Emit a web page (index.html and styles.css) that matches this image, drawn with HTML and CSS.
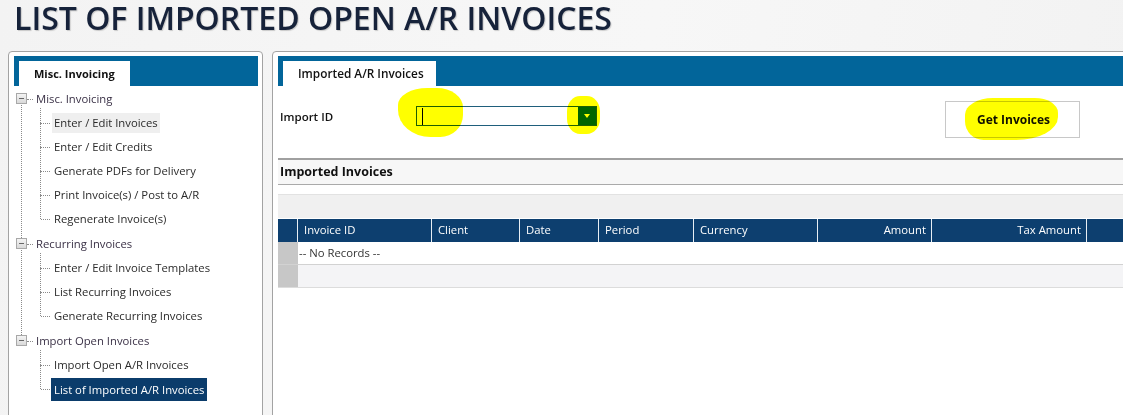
FILE: index.html
```html
<!DOCTYPE html>
<html>
<head>
<meta charset="utf-8">
<link rel="stylesheet" href="styles.css">
</head>
<body>
<h1 class="page-title">LIST OF IMPORTED OPEN A/R INVOICES</h1>
<div class="main">
  <aside class="panel side">
    <div class="tabbar"><div class="tab">Misc. Invoicing</div></div>
    <ul class="tree">
      <li class="root">
        <div class="root-node"><span class="exp"></span><span class="root-label">Misc. Invoicing</span></div>
        <ul class="children">
          <li class="child"><span class="label hover">Enter / Edit Invoices</span></li>
          <li class="child"><span class="label">Enter / Edit Credits</span></li>
          <li class="child"><span class="label">Generate PDFs for Delivery</span></li>
          <li class="child"><span class="label">Print Invoice(s) / Post to A/R</span></li>
          <li class="child"><span class="label">Regenerate Invoice(s)</span></li>
        </ul>
      </li>
      <li class="root">
        <div class="root-node"><span class="exp"></span><span class="root-label">Recurring Invoices</span></div>
        <ul class="children">
          <li class="child"><span class="label">Enter / Edit Invoice Templates</span></li>
          <li class="child"><span class="label">List Recurring Invoices</span></li>
          <li class="child"><span class="label">Generate Recurring Invoices</span></li>
        </ul>
      </li>
      <li class="root last">
        <div class="root-node"><span class="exp"></span><span class="root-label">Import Open Invoices</span></div>
        <ul class="children">
          <li class="child"><span class="label">Import Open A/R Invoices</span></li>
          <li class="child"><span class="label selected">List of Imported A/R Invoices</span></li>
        </ul>
      </li>
    </ul>
  </aside>
  <section class="panel content">
    <div class="tabbar"><div class="tab tab-wide">Imported A/R Invoices</div></div>
    <div class="form-row">
      <label class="field-label">Import ID</label>
      <div class="combo"><span class="caret"></span><span class="combo-btn"><span class="arrow"></span></span></div>
      <button class="get-btn">Get Invoices</button>
    </div>
    <div class="section-head">Imported Invoices</div>
    <div class="grid">
      <div class="grid-toolbar"></div>
      <div class="grid-row grid-header">
        <div class="cell sel"></div>
        <div class="cell">Invoice ID</div>
        <div class="cell">Client</div>
        <div class="cell">Date</div>
        <div class="cell">Period</div>
        <div class="cell">Currency</div>
        <div class="cell right">Amount</div>
        <div class="cell right">Tax Amount</div>
        <div class="cell last"></div>
      </div>
      <div class="grid-body">
        <div class="grid-row norec">
          <div class="cell sel"></div>
          <div class="cell span">-- No Records --</div>
        </div>
        <div class="grid-row footer">
          <div class="cell sel"></div>
          <div class="cell span"></div>
        </div>
      </div>
    </div>
  </section>
</div>
<div class="hl hl1"></div>
<div class="hl hl2"></div>
<div class="hl hl3"></div>
</body>
</html>
```
FILE: styles.css
```css
* { box-sizing: border-box; }
html, body { margin: 0; padding: 0; }
body {
  width: 1123px;
  height: 415px;
  overflow: hidden;
  position: relative;
  font-family: "Open Sans", "Liberation Sans", sans-serif;
  font-size: 11.3px;
  color: #222;
  background: linear-gradient(100deg, #f3f3f3 0%, #f7f7f7 55%, #f2f2f2 100%);
}
.page-title {
  margin: 0;
  padding: 0 0 0 14px;
  height: 51px;
  font-size: 32px;
  font-weight: 600;
  line-height: 36px;
  color: #16223a;
  letter-spacing: 0;
  text-shadow: 1px 1px 1px rgba(0,0,0,0.18);
}
.main {
  display: flex;
  gap: 9px;
  padding-left: 8px;
}
.panel {
  flex-shrink: 0;
  background: #fff;
  border: 1px solid #a3a3a3;
  height: 400px;
  padding-top: 4px;
}
.side {
  width: 255px;
  border-radius: 4px;
  padding-left: 5px;
  padding-right: 4px;
}
.content {
  width: 880px;
  border-radius: 4px 0 0 0;
  padding-left: 5px;
}
.tabbar {
  height: 30px;
  background: #02659a;
  padding: 5px 0 0 5px;
  display: flex;
}
.tab {
  height: 25px;
  width: 111px;
  background: #fff;
  font-weight: 700;
  font-size: 11px;
  line-height: 25px;
  padding-left: 15px;
  color: #111;
}
.tab-wide { width: 153px; font-weight: 600; font-size: 11.8px; }

/* tree */
.tree, .children { list-style: none; margin: 0; padding: 0; }
.root { position: relative; }
.root:not(.last)::before {
  content: "";
  position: absolute;
  left: 7px;
  top: 17px;
  bottom: -7px;
  border-left: 1px dotted #8a8a8a;
}
.root-node {
  height: 25px;
  display: flex;
  align-items: center;
}
.exp {
  width: 11px;
  height: 11px;
  margin-left: 2px;
  border: 1px solid #a8a8a8;
  background: linear-gradient(#f4f4f4, #d9d9d9);
  position: relative;
}
.exp::after {
  content: "";
  position: absolute;
  left: 2px; top: 4px;
  width: 5px; height: 1px;
  background: #666;
}
.root-label {
  margin-left: 9px;
  color: #3a3146;
  position: relative;
}
.root-label::before {
  content: "";
  position: absolute;
  left: -9px; top: 50%;
  width: 6px;
  border-top: 1px dotted #8a8a8a;
}
.children { position: relative; }
.child {
  height: 24px;
  display: flex;
  align-items: center;
  padding-left: 38px;
  position: relative;
}
.child::before {
  content: "";
  position: absolute;
  left: 26px; top: -12px; bottom: 12px;
  border-left: 1px dotted #8a8a8a;
}
.child:first-child::before { top: -3px; }
.child::after {
  content: "";
  position: absolute;
  left: 27px; top: 12px;
  width: 9px;
  border-top: 1px dotted #8a8a8a;
}
.label {
  display: block;
  height: 20px;
  line-height: 20px;
  padding: 0 2px;
  color: #2a2a2a;
}
.label.hover { background: #efefef; }
.label.selected {
  background: #0b3c6b;
  color: #fff;
  height: 23px;
  line-height: 23px;
  margin-left: -1px;
  padding: 0 3px;
}

/* form */
.form-row {
  height: 72px;
  display: flex;
  align-items: flex-start;
  padding-top: 15px;
}
.field-label {
  width: 138px;
  padding-left: 2px;
  margin-top: 8px;
  font-weight: 600;
  font-size: 11.5px;
  color: #111;
}
.combo {
  width: 181px;
  height: 20px;
  margin-top: 5px;
  border: 1px solid #1f5f7c;
  background: #fff;
  display: flex;
  justify-content: space-between;
}
.caret {
  width: 1px;
  height: 17px;
  margin: 1px 0 0 5px;
  background: #000;
}
.combo-btn {
  width: 18px;
  height: 18px;
  background: #006400;
  display: flex;
  align-items: center;
  justify-content: center;
}
.arrow {
  width: 0; height: 0;
  border-left: 3.5px solid transparent;
  border-right: 3.5px solid transparent;
  border-top: 4px solid #fff;
}
.get-btn {
  margin-left: 348px;
  width: 135px;
  height: 37px;
  background: #fff;
  border: 1px solid #c8c8c8;
  font-family: inherit;
  font-size: 12px;
  font-weight: 700;
  color: #111;
  padding: 0 0 0 2px;
}
.section-head {
  height: 27px;
  border-top: 2px solid #a0a0a0;
  border-bottom: 1px solid #aaa;
  background: #f7f7f7;
  font-weight: 700;
  font-size: 12.5px;
  line-height: 24px;
  padding-left: 2px;
  color: #111;
}

/* grid */
.grid { margin-top: 9px; }
.grid-toolbar {
  height: 24px;
  border-top: 1px solid #e2e2e2;
  background: #f0f0f0;
}
.grid-row {
  display: grid;
  grid-template-columns: 20px 134px 88px 79px 95px 124px 114px 155px 1fr;
}
.grid-header {
  height: 24px;
  background: #0d3f6f;
  color: #fff;
  border-top: 1px solid #fff;
}
.grid-header .cell {
  border-right: 1px solid #e8eef4;
  padding: 0 6px;
  line-height: 22px;
}
.grid-header .cell.last { border-right: none; }
.cell.right { text-align: right; padding-right: 5px; }
.cell.sel { padding: 0; }
.grid-body .grid-row { grid-template-columns: 20px 1fr; }
.grid-body .cell.sel { background: #c7c7c7; }
.norec { height: 23px; border-bottom: 1px solid #d2d2d2; }
.norec .cell.span { line-height: 22px; padding-left: 1px; color: #333; }
.footer { height: 23px; border-bottom: 1px solid #dcdcdc; }
.footer .cell.span { background: #f4f4f6; }

/* highlighter marks */
.hl {
  position: absolute;
  background: #ffff00;
  mix-blend-mode: multiply;
}
.hl1 { left: 398px; top: 88px; width: 65px; height: 49px; border-radius: 45% 40% 35% 50% / 35% 40% 45% 55%; }
.hl2 { left: 567px; top: 96px; width: 33px; height: 38px; border-radius: 40%; }
.hl3 { left: 965px; top: 98px; width: 93px; height: 42px; border-radius: 30% 25% 45% 20% / 40% 35% 55% 45%; }
```
